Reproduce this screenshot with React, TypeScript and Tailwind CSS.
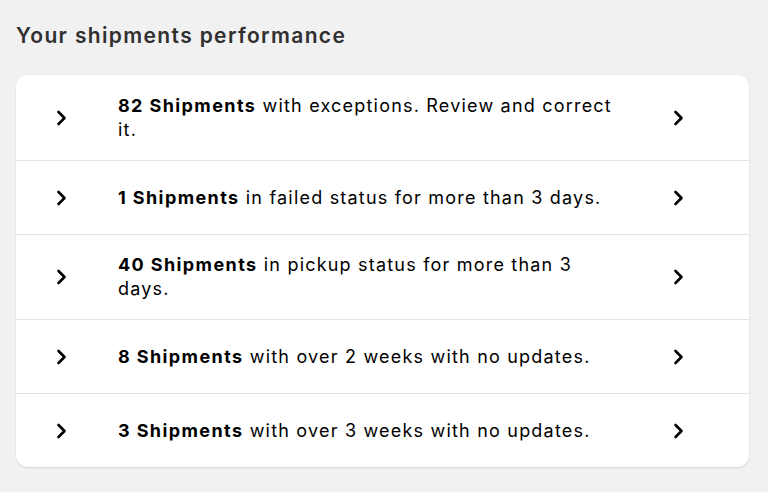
const rows = [
  { count: "82 Shipments", text: "with exceptions. Review and correct it." },
  { count: "1 Shipments", text: "in failed status for more than 3 days." },
  { count: "40 Shipments", text: "in pickup status for more than 3 days." },
  { count: "8 Shipments", text: "with over 2 weeks with no updates." },
  { count: "3 Shipments", text: "with over 3 weeks with no updates." },
];

function Chevron() {
  return (
    <svg width="14" height="16" viewBox="0 0 14 16" fill="none">
      <path d="M3.5 2L9.5 8L3.5 14" stroke="#000" strokeWidth="2.6" strokeLinecap="round" strokeLinejoin="round" />
    </svg>
  );
}

export default function App() {
  return (
    <div className="min-h-[492px] w-[768px] bg-[#f1f1f1] px-4 pt-[21px] pb-6 font-['Inter','Liberation_Sans',sans-serif]">
      <h2 className="text-[21px] leading-[30px] font-semibold tracking-[1.35px] text-[#303030]">Your shipments performance</h2>
      <div className="mt-[24px] w-[733px] rounded-xl bg-white shadow-[0_1px_2px_rgba(0,0,0,0.12)]">
        {rows.map((r, i) => (
          <div
            key={i}
            className={`flex min-h-[74px] items-center py-[18px] ${i > 0 ? "border-t border-[#e3e3e3]" : "pt-[19px]"}`}
          >
            <div className="flex w-[92px] justify-center">
              <Chevron />
            </div>
            <p className="ml-[10px] w-[500px] text-[18px] leading-[24px] tracking-[1.2px] text-[#000]">
              <span className="font-bold tracking-[1.4px]">{r.count}</span> {r.text}
            </p>
            <div className="flex flex-1 justify-center pr-[10px]">
              <Chevron />
            </div>
          </div>
        ))}
      </div>
    </div>
  );
}
